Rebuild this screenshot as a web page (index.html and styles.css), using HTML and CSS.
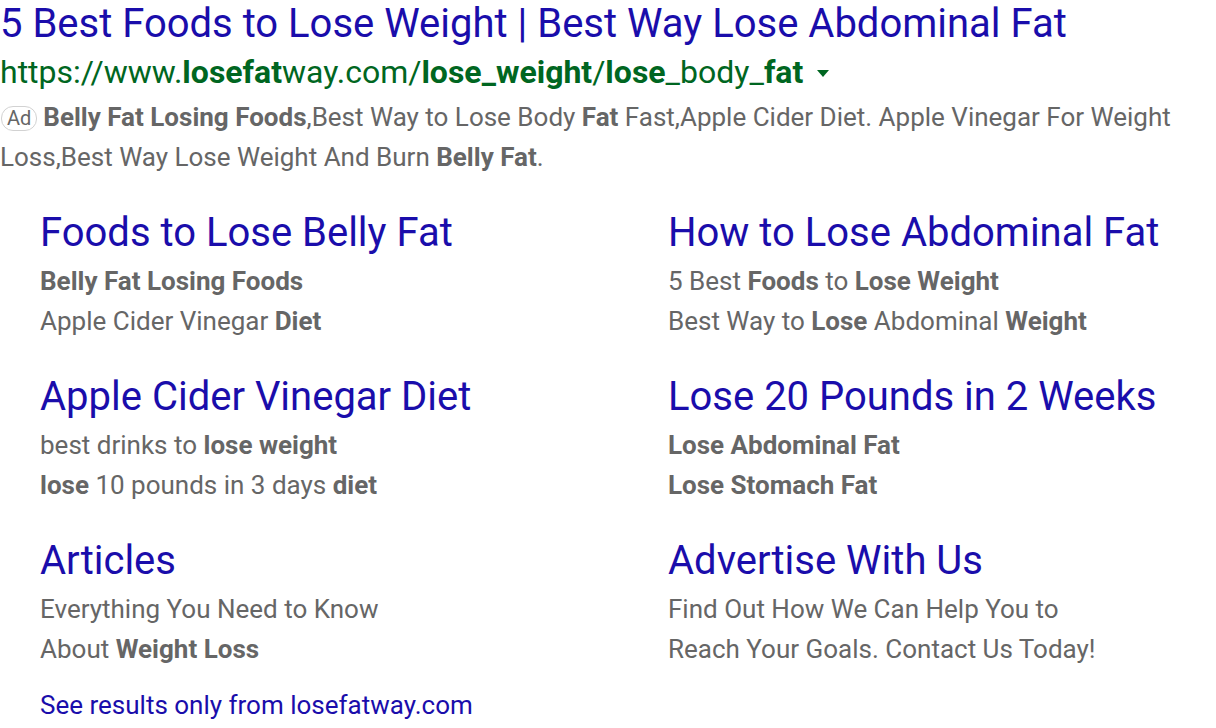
FILE: index.html
```html
<!DOCTYPE html>
<html>
<head>
<meta charset="utf-8">
<link rel="stylesheet" href="styles.css">
</head>
<body>
<div class="ad">
  <a class="title" href="#">5 Best Foods to Lose Weight | Best Way Lose Abdominal Fat</a>
  <div class="url">https://www.<b>losefat</b>way.com/<b>lose_weight</b>/<b>lose</b>_body_<b>fat</b><span class="arrow"></span></div>
  <div class="desc"><span class="badge">Ad</span><b>Belly Fat Losing Foods</b>,Best Way to Lose Body <b>Fat</b> Fast,Apple Cider Diet. Apple Vinegar For Weight Loss,Best Way Lose Weight And Burn <b>Belly Fat</b>.</div>
  <div class="links">
    <div class="link">
      <a class="link-title" href="#">Foods to Lose Belly Fat</a>
      <div class="line"><b>Belly Fat Losing Foods</b></div>
      <div class="line">Apple Cider Vinegar <b>Diet</b></div>
    </div>
    <div class="link">
      <a class="link-title" href="#">How to Lose Abdominal Fat</a>
      <div class="line">5 Best <b>Foods</b> to <b>Lose Weight</b></div>
      <div class="line">Best Way to <b>Lose</b> Abdominal <b>Weight</b></div>
    </div>
    <div class="link">
      <a class="link-title" href="#">Apple Cider Vinegar Diet</a>
      <div class="line">best drinks to <b>lose weight</b></div>
      <div class="line"><b>lose</b> 10 pounds in 3 days <b>diet</b></div>
    </div>
    <div class="link">
      <a class="link-title" href="#">Lose 20 Pounds in 2 Weeks</a>
      <div class="line"><b>Lose Abdominal Fat</b></div>
      <div class="line"><b>Lose Stomach Fat</b></div>
    </div>
    <div class="link">
      <a class="link-title" href="#">Articles</a>
      <div class="line">Everything You Need to Know</div>
      <div class="line">About <b>Weight Loss</b></div>
    </div>
    <div class="link">
      <a class="link-title" href="#">Advertise With Us</a>
      <div class="line">Find Out How We Can Help You to</div>
      <div class="line">Reach Your Goals. Contact Us Today!</div>
    </div>
  </div>
  <a class="more" href="#">See results only from losefatway.com</a>
</div>
</body>
</html>
```

FILE: styles.css
```css
html, body {
  margin: 0;
  padding: 0;
  background: #fff;
}
body {
  font-family: Roboto, "Liberation Sans", Arial, sans-serif;
  color: #666;
}
a {
  text-decoration: none;
}
b {
  font-weight: 700;
}
.ad {
  display: flex;
  flex-direction: column;
  align-items: flex-start;
}
.title {
  color: #1a0dab;
  font-size: 40px;
  line-height: 48px;
  white-space: nowrap;
}
.url {
  color: #006621;
  font-size: 32px;
  line-height: 49px;
  display: flex;
  align-items: center;
  white-space: nowrap;
}
.arrow {
  width: 0;
  height: 0;
  border-left: 6.5px solid transparent;
  border-right: 6.5px solid transparent;
  border-top: 7px solid #006621;
  margin-left: 14px;
  margin-top: 2px;
}
.desc {
  font-size: 26px;
  line-height: 40px;
  width: 1180px;
  color: #666;
}
.badge {
  display: inline-block;
  font-size: 20px;
  line-height: 23px;
  padding: 0 5px;
  border: 1.5px solid #d2d2d2;
  border-radius: 12px;
  margin-left: 1px;
  margin-right: 6px;
  vertical-align: 1px;
  color: #666;
}
.links {
  display: grid;
  grid-template-columns: 628px 1fr;
  row-gap: 30px;
  padding-left: 40px;
  margin-top: 30px;
  align-self: stretch;
}
.link {
  display: flex;
  flex-direction: column;
  align-items: flex-start;
}
.link-title {
  color: #1a0dab;
  font-size: 40px;
  line-height: 52px;
  margin-bottom: 2px;
  white-space: nowrap;
}
.line {
  font-size: 26px;
  line-height: 40px;
  white-space: nowrap;
}
.more {
  color: #1a0dab;
  font-size: 26px;
  line-height: 40px;
  margin-left: 40px;
  margin-top: 16px;
}
```
